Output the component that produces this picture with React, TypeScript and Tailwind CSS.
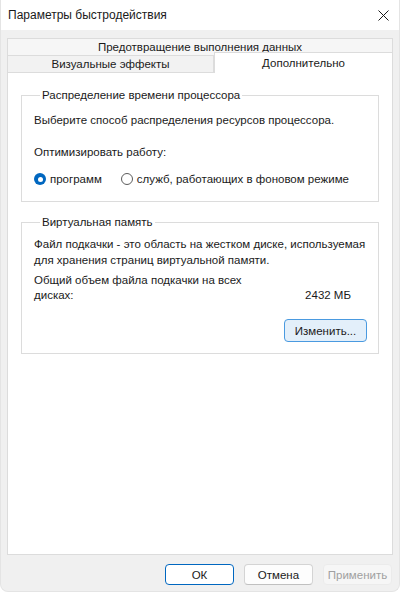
import React from "react";

function CloseIcon() {
  return (
    <svg width="11" height="11" viewBox="0 0 11 11" className="text-[#1a1a1a]">
      <path d="M0.5 0.5 L10.5 10.5 M10.5 0.5 L0.5 10.5" stroke="currentColor" strokeWidth="1" fill="none" />
    </svg>
  );
}

function Radio({ checked, label }: { checked?: boolean; label: string }) {
  return (
    <label className="flex items-center gap-[4px]">
      {checked ? (
        <span className="w-[12px] h-[12px] rounded-full bg-[#0067c0] flex items-center justify-center">
          <span className="w-[5px] h-[5px] rounded-full bg-white" />
        </span>
      ) : (
        <span className="w-[12px] h-[12px] rounded-full border border-[#5c5c5c] bg-white" />
      )}
      <span>{label}</span>
    </label>
  );
}

export default function App() {
  return (
    <div className="w-[400px] h-[592px] bg-white font-['Liberation_Sans',sans-serif] text-[11.5px] leading-[16px] text-[#1a1a1a]">
      <div className="flex flex-col h-full rounded-b-[8px] bg-[#f0f0f0] overflow-hidden border-x border-b border-[#e4e4e4]">
        {/* Title bar */}
        <div className="h-[30px] shrink-0 bg-white flex items-center justify-between pl-[7px] pr-[10px] text-[12px]">
          <span>Параметры быстродействия</span>
          <CloseIcon />
        </div>

        {/* Body */}
        <div className="flex-1 flex flex-col px-[6px] pt-[8px] pb-[6px]">
          {/* Tabs */}
          <div className="h-[17px] border border-b-0 border-[#dcdcdc] bg-[#f6f6f6] flex items-center justify-center">
            Предотвращение выполнения данных
          </div>
          <div className="h-[17px] flex items-end">
            <div className="w-[207px] h-[17px] border border-b-0 border-[#dcdcdc] bg-[#f2f2f2] flex items-center justify-center">
              Визуальные эффекты
            </div>
            <div className="relative top-px z-10 flex-1 h-[21px] border border-b-0 border-[#dcdcdc] bg-white flex items-start pt-[2px] justify-center">
              Дополнительно
            </div>
          </div>

          {/* Panel */}
          <div className="flex-1 border border-[#dcdcdc] bg-white px-[13px] pt-[14px]">
            <fieldset className="border border-[#dcdcdc] px-[12px] pb-[14px]">
              <legend className="ml-[6px] px-[2px]">Распределение времени процессора</legend>
              <p className="mt-[9px]">Выберите способ распределения ресурсов процессора.</p>
              <p className="mt-[16px]">Оптимизировать работу:</p>
              <div className="mt-[11px] flex items-center gap-[19px]">
                <Radio checked label="программ" />
                <Radio label="служб, работающих в фоновом режиме" />
              </div>
            </fieldset>

            <fieldset className="mt-[12px] border border-[#dcdcdc] px-[12px] pb-[11px]">
              <legend className="ml-[6px] px-[2px]">Виртуальная память</legend>
              <p className="mt-[6px]">
                Файл подкачки - это область на жестком диске, используемая для хранения страниц виртуальной памяти.
              </p>
              <div className="mt-[5px] flex items-end justify-between pr-[15px]">
                <p className="w-[215px] leading-[15px]">Общий объем файла подкачки на всех дисках:</p>
                <span className="leading-[15px]">2432 МБ</span>
              </div>
              <div className="mt-[16px] flex justify-end">
                <button className="w-[83px] h-[23px] rounded-[4px] border border-[#4a9ae0] bg-[#e3effa] mr-[-1px]">
                  Изменить...
                </button>
              </div>
            </fieldset>
          </div>

          {/* Dialog buttons */}
          <div className="mt-[9px] flex justify-end gap-[10px] pr-[1px]">
            <button className="w-[69px] h-[21px] rounded-[4px] border border-[#0067c0] bg-white">
              ОК
            </button>
            <button className="w-[69px] h-[21px] rounded-[4px] border border-[#d4d4d4] border-b-[#c0c0c0] bg-[#fdfdfd]">
              Отмена
            </button>
            <button className="w-[69px] h-[21px] rounded-[4px] border border-[#ebebeb] bg-[#f6f6f6] text-[#a0a0a0]">
              Применить
            </button>
          </div>
        </div>
      </div>
    </div>
  );
}
